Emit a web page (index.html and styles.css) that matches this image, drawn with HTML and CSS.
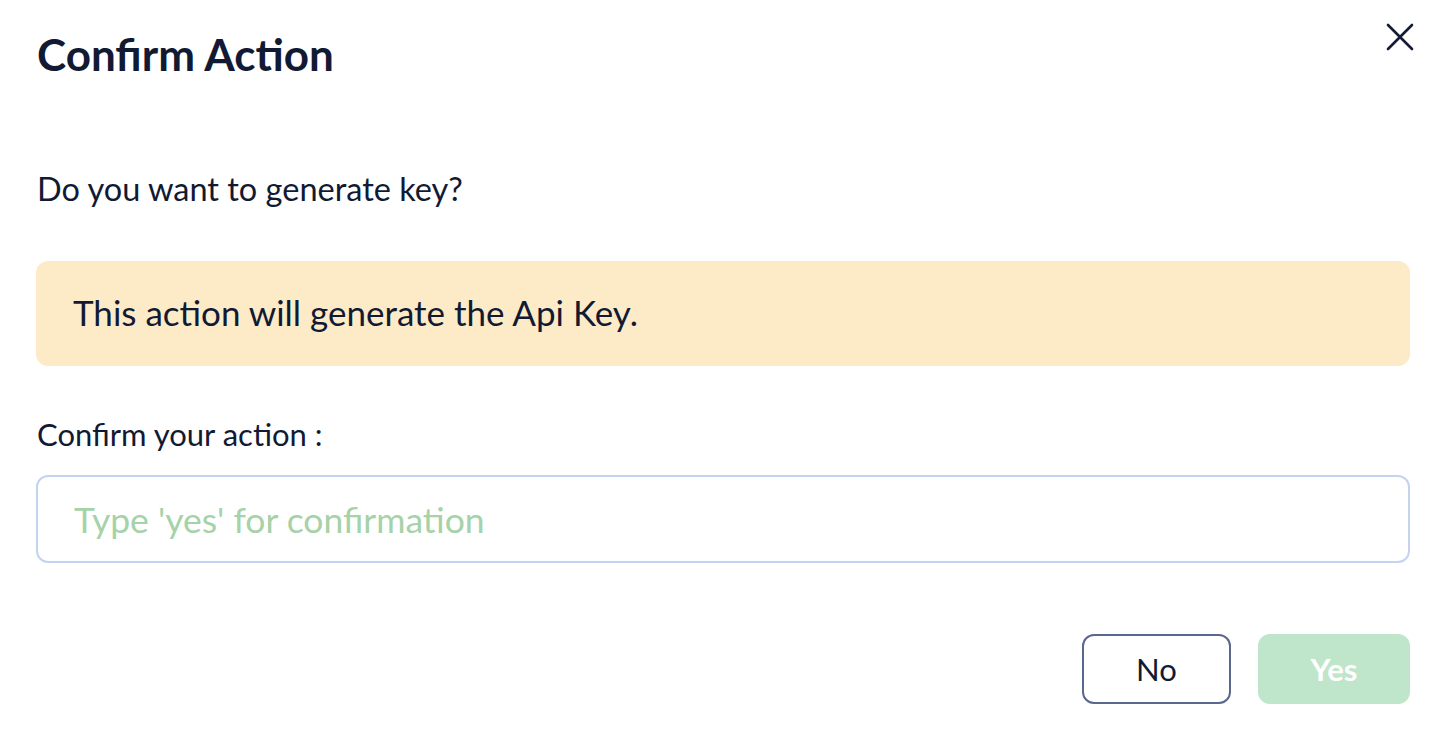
FILE: index.html
```html
<!DOCTYPE html>
<html lang="en">
<head>
    <meta charset="UTF-8">
    <meta name="viewport" content="width=device-width, initial-scale=1.0">
    <title>Confirm Action</title>
    <link rel="stylesheet" href="styles.css">
</head>
<body>
    <div class="dialog">
        <div class="dialog-header">
            <h1>Confirm Action</h1>
            <button type="button" class="close" aria-label="Close">
                <svg width="28" height="28" viewBox="0 0 28 28">
                    <path d="M2 2 L26 26 M26 2 L2 26" stroke="#141b34" stroke-width="2.6" stroke-linecap="round" fill="none"/>
                </svg>
            </button>
        </div>
        <p class="question">Do you want to generate key?</p>
        <div class="alert">This action will generate the Api Key.</div>
        <label for="confirmInput">Confirm your action :</label>
        <input type="text" id="confirmInput" placeholder="Type 'yes' for confirmation">
        <div class="actions">
            <button type="button" class="btn btn-no">No</button>
            <button type="button" class="btn btn-yes" disabled>Yes</button>
        </div>
    </div>
</body>
</html>
```

FILE: styles.css
```css
body {
    font-family: Lato, "Noto Sans", sans-serif;
    margin: 0;
    padding: 0;
    background-color: #fff;
    color: #121a33;
}
.dialog {
    padding: 22px 23px 0 36px;
}
.dialog-header {
    display: flex;
    justify-content: space-between;
    align-items: flex-start;
}
h1 {
    margin: 6px 0 0 1px;
    font-size: 44px;
    font-weight: 700;
    line-height: 52px;
}
.close {
    background: none;
    border: none;
    padding: 0;
    margin: 1px -4px 0 0;
    cursor: pointer;
    line-height: 0;
}
.question {
    margin: 89px 0 0 1px;
    font-size: 32.5px;
    line-height: 40px;
}
.alert {
    margin-top: 52px;
    background-color: #fdebc8;
    border-radius: 12px;
    padding: 31px 37px 33px;
    font-size: 35px;
    line-height: 41px;
}
label {
    display: block;
    margin: 50px 0 0 1px;
    font-size: 31px;
    line-height: 36px;
}
input[type="text"] {
    display: block;
    box-sizing: border-box;
    width: 100%;
    height: 88px;
    margin-top: 23px;
    padding: 0 36px;
    border: 2px solid #c5d2f0;
    border-radius: 12px;
    font-family: inherit;
    font-size: 35.5px;
    color: #121a33;
    outline: none;
}
input[type="text"]::placeholder {
    color: #a6d2a8;
}
.actions {
    display: flex;
    justify-content: flex-end;
    gap: 27px;
    margin-top: 71px;
}
.btn {
    height: 70px;
    border-radius: 12px;
    font-family: inherit;
    font-size: 31px;
    cursor: pointer;
}
.btn-no {
    width: 149px;
    background-color: #fff;
    border: 2px solid #5a6890;
    color: #121a33;
}
.btn-yes {
    width: 152px;
    background-color: #bfe5cb;
    border: none;
    color: #fff;
    font-weight: 700;
}
```
